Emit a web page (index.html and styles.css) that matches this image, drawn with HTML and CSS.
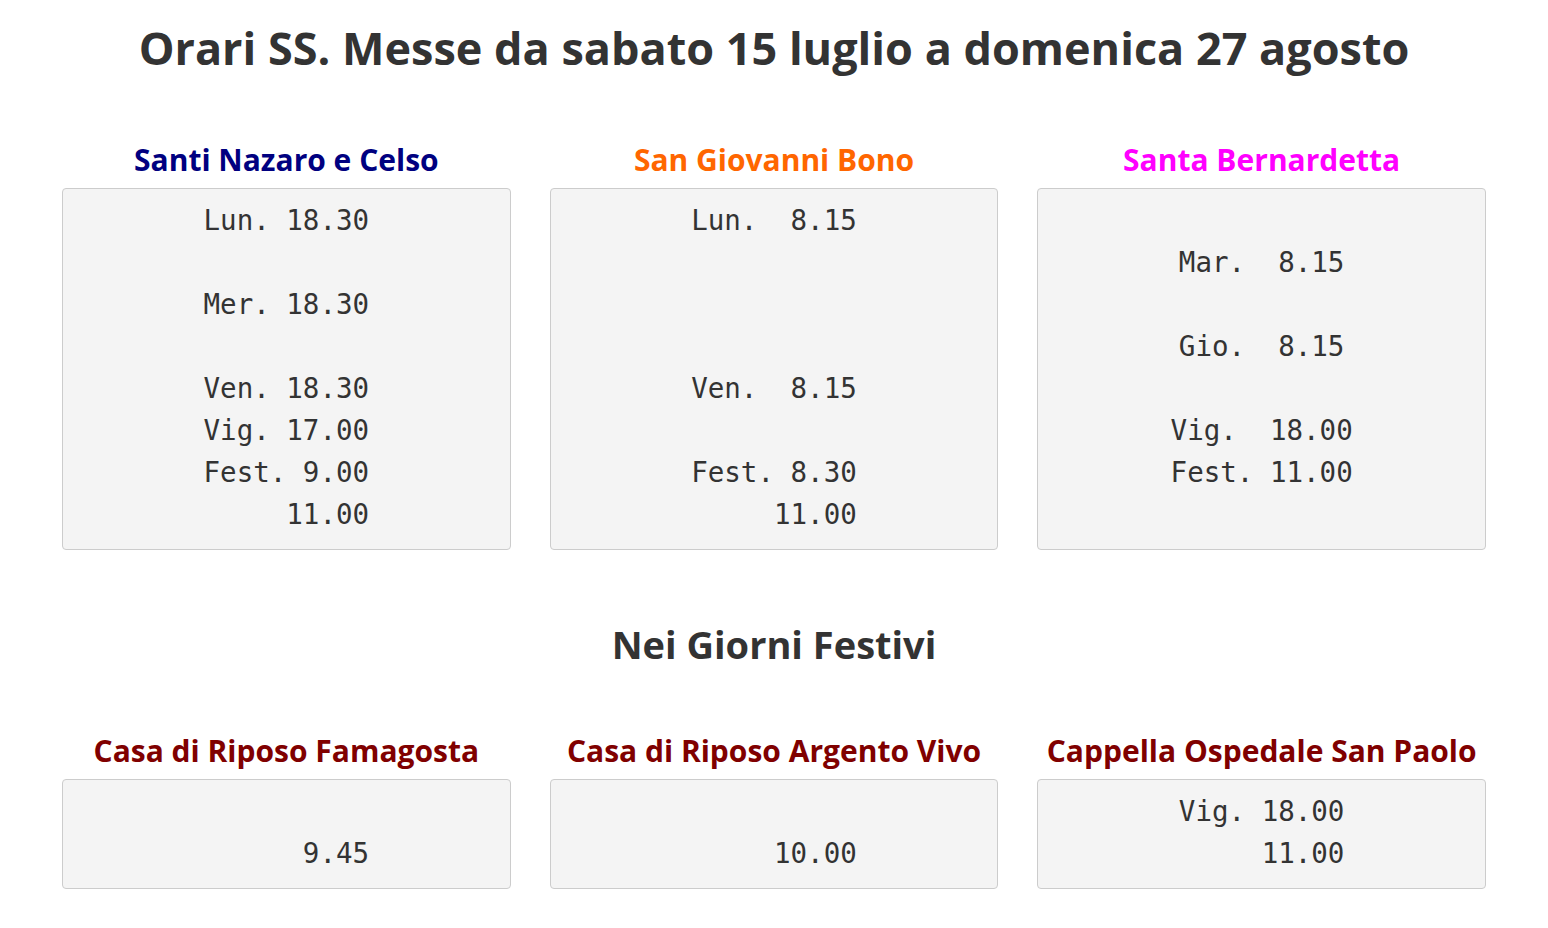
FILE: index.html
```html
<!DOCTYPE html>
<html lang="it">
<head>
<meta charset="utf-8">
<title>Orari SS. Messe</title>
<link rel="stylesheet" href="styles.css">
</head>
<body>
<div class="page">
  <h1 class="title">Orari SS. Messe da sabato 15 luglio a domenica 27 agosto</h1>
  <div class="grid grid-top">
    <div class="col">
      <h3 class="church navy">Santi Nazaro e Celso</h3>
      <pre class="times">Lun. 18.30

Mer. 18.30

Ven. 18.30
Vig. 17.00
Fest. 9.00
     11.00</pre>
    </div>
    <div class="col">
      <h3 class="church orange">San Giovanni Bono</h3>
      <pre class="times">Lun.  8.15



Ven.  8.15

Fest. 8.30
     11.00</pre>
    </div>
    <div class="col">
      <h3 class="church magenta">Santa Bernardetta</h3>
      <pre class="times">

Mar.  8.15

Gio.  8.15

Vig.  18.00
Fest. 11.00
</pre>
    </div>
  </div>
  <h2 class="subtitle">Nei Giorni Festivi</h2>
  <div class="grid grid-bottom">
    <div class="col">
      <h3 class="church maroon">Casa di Riposo Famagosta</h3>
      <pre class="times">

      9.45</pre>
    </div>
    <div class="col">
      <h3 class="church maroon">Casa di Riposo Argento Vivo</h3>
      <pre class="times">

     10.00</pre>
    </div>
    <div class="col">
      <h3 class="church maroon">Cappella Ospedale San Paolo</h3>
      <pre class="times">Vig. 18.00
     11.00</pre>
    </div>
  </div>
</div>
</body>
</html>
```
FILE: styles.css
```css
html, body {
  margin: 0;
  padding: 0;
  background: #ffffff;
}
body {
  font-family: "Open Sans", "Liberation Sans", sans-serif;
  color: #333333;
}
.page {
  padding: 0 62px 0 62px;
}
.title {
  margin: 0;
  padding-top: 22px;
  height: 58px;
  font-size: 45px;
  line-height: 52px;
  font-weight: 700;
  text-align: center;
  color: #333333;
}
.grid {
  display: grid;
  grid-template-columns: repeat(3, 1fr);
  column-gap: 39px;
}
.grid-top {
  margin-top: 60px;
}
.col {
  display: flex;
  flex-direction: column;
}
.church {
  margin: 0 0 8px 0;
  font-size: 30px;
  line-height: 40px;
  font-weight: 700;
  text-align: center;
}
.navy { color: #000080; }
.orange { color: #ff6600; }
.magenta { color: #ff00ff; }
.maroon { color: #800000; }
.times {
  flex: 1;
  margin: 0;
  padding: 10px 10px 14px 10px;
  background: #f4f4f4;
  border: 1px solid #cccccc;
  border-radius: 4px;
  font-family: "DejaVu Sans Mono", "Liberation Mono", monospace;
  font-size: 27.5px;
  line-height: 42px;
  color: #333333;
  text-align: center;
}
.subtitle {
  margin: 68px 0 0 0;
  font-size: 38px;
  line-height: 52px;
  font-weight: 700;
  text-align: center;
  color: #333333;
}
.grid-bottom {
  margin-top: 61px;
}
```
